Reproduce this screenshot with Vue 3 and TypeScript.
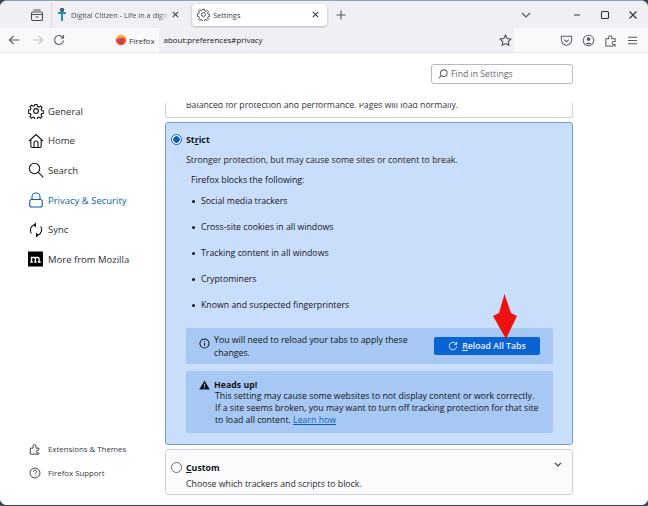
<script setup lang="ts">
const nav = [
  { label: 'General', icon: 'gear', active: false },
  { label: 'Home', icon: 'home', active: false },
  { label: 'Search', icon: 'search', active: false },
  { label: 'Privacy & Security', icon: 'lock', active: true },
  { label: 'Sync', icon: 'sync', active: false },
  { label: 'More from Mozilla', icon: 'moz', active: false },
]
const blocks = ['Social media trackers', 'Cross-site cookies in all windows', 'Tracking content in all windows', 'Cryptominers', 'Known and suspected fingerprinters']
const gear = 'M6.9 1.5h2.2l.4 2 1.4.6 1.7-1.1 1.5 1.5-1.1 1.7.6 1.4 2 .4v2.2l-2 .4-.6 1.4 1.1 1.7-1.5 1.5-1.7-1.1-1.4.6-.4 2H6.900l-.4-2-1.400-.6-1.700 1.100-1.500-1.500 1.100-1.700-.6-1.400-2-.4V7.100l2-.4.6-1.400-1.100-1.700 1.500-1.500 1.700 1.100 1.400-.6z'
</script>

<template>
  <div class="window">
    <header class="tabbar">
      <svg class="tab-list" width="14" height="14" viewBox="0 0 14 14"><rect x="1.500" y="4" width="11" height="8.500" rx="1.500" /><path d="M1.500 6.500h11M3.500 2h7M5.500 9h3" /></svg>
      <span class="tab-sep"></span>
      <div class="tab">
        <svg width="12" height="14" viewBox="0 0 12 14"><path d="M6 1.500v11.500M2 5h8" stroke="#1c93b8" stroke-width="2" fill="none" /><circle cx="6" cy="2" r="1.600" fill="#1c93b8" /></svg>
        <span class="tab-title">Digital Citizen - Life in a digital</span>
        <svg class="x" width="9" height="9" viewBox="0 0 9 9"><path d="M1 1l7 7M8 1l-7 7" /></svg>
      </div>
      <div class="tab current">
        <svg class="tab-gear" width="13" height="13" viewBox="0 0 16 16"><path :d="gear" /><circle cx="8" cy="8" r="2.400" /></svg>
        <span class="tab-title">Settings</span>
        <svg class="x" width="9" height="9" viewBox="0 0 9 9"><path d="M1 1l7 7M8 1l-7 7" /></svg>
      </div>
      <svg class="plus" width="10" height="10" viewBox="0 0 10 10"><path d="M5 .5v9M.5 5h9" /></svg>
      <span class="grow"></span>
      <svg class="caption chev" width="10" height="6" viewBox="0 0 10 6"><path d="M1 1l4 4 4-4" /></svg>
      <div class="caption-btns">
        <svg width="10" height="10" viewBox="0 0 10 10"><path d="M2 5h6" /></svg>
        <svg width="10" height="10" viewBox="0 0 10 10"><rect x="1.500" y="1.500" width="7" height="7" rx="1" /></svg>
        <svg width="10" height="10" viewBox="0 0 10 10"><path d="M1.500 1.500l7 7M8.500 1.500l-7 7" /></svg>
      </div>
    </header>

    <div class="toolbar">
      <div class="nav-btns">
        <svg width="12" height="12" viewBox="0 0 12 12"><path d="M11 6H1.500M5.500 2l-4 4 4 4" /></svg>
        <svg class="off" width="12" height="12" viewBox="0 0 12 12"><path d="M1 6h9.500M6.500 2l4 4-4 4" /></svg>
        <svg width="12" height="12" viewBox="0 0 12 12"><path d="M10.500 6.500a4.500 4.500 0 1 1-1.300-3.700L10.500 4M10.500 1v3h-3" /></svg>
      </div>
      <div class="urlbar">
        <div class="identity">
          <svg width="12" height="12" viewBox="0 0 12 12"><circle cx="6" cy="6.300" r="5" fill="#e8492f" stroke="none" /><path d="M1.500 5C2 2 4 .8 6.500 1c2.500.2 4 2 4.300 4C9.500 3.500 8 3.500 6.500 4 5 4.500 3 4 1.500 5z" fill="#ffa436" stroke="none" /><circle cx="6" cy="7" r="2.200" fill="#c93a6a" stroke="none" /></svg>
          <span>Firefox</span>
        </div>
        <span class="url">about:preferences#privacy</span>
        <span class="grow"></span>
        <svg class="star" width="13" height="13" viewBox="0 0 14 14"><path d="M7 1.200l1.800 3.700 4 .6-2.900 2.800.7 4L7 10.400l-3.600 1.900.7-4L1.200 5.500l4-.6z" /></svg>
      </div>
      <div class="tools">
        <svg width="13" height="13" viewBox="0 0 14 14"><path d="M1.500 2.500h11v4a5.500 5.500 0 0 1-11 0z" /><path d="M4.500 6l2.500 2.300L9.500 6" /></svg>
        <svg width="13" height="13" viewBox="0 0 14 14"><circle cx="7" cy="7" r="5.700" /><circle cx="7" cy="5.500" r="2" class="fill" /><path d="M3.500 11c.5-2.200 6.500-2.200 7 0z" class="fill" /></svg>
        <svg width="13" height="13" viewBox="0 0 14 14"><path d="M2 5h3V3.500a1.700 1.700 0 0 1 3.400 0V5H12v3h-1.500a1.700 1.700 0 0 0 0 3.400H12V13H2z" /></svg>
        <svg width="13" height="13" viewBox="0 0 14 14"><path d="M2 3.500h10M2 7h10M2 10.500h10" /></svg>
      </div>
    </div>

    <div class="page">
      <aside class="sidebar">
        <nav class="cats">
          <div v-for="n in nav" :key="n.label" class="cat" :class="{ active: n.active }">
            <svg v-if="n.icon === 'gear'" width="16" height="16" viewBox="0 0 16 16"><path :d="gear" /><circle cx="8" cy="8" r="2.400" /></svg>
            <svg v-else-if="n.icon === 'home'" width="16" height="16" viewBox="0 0 16 16"><path d="M1 8l7-6.500L15 8M2.800 6.500V13a1.500 1.500 0 0 0 1.500 1.500h7.400a1.500 1.500 0 0 0 1.500-1.500V6.500M6 14.500V10a2 2 0 0 1 4 0v4.500" /></svg>
            <svg v-else-if="n.icon === 'search'" width="16" height="16" viewBox="0 0 16 16"><circle cx="6.500" cy="6.500" r="5.200" /><path d="M10.300 10.300l5 5" /></svg>
            <svg v-else-if="n.icon === 'lock'" width="16" height="16" viewBox="0 0 16 16"><path d="M4 7V5a4 4 0 0 1 8 0v2" /><rect x="1.700" y="7.500" width="12.600" height="7.500" rx="2" /></svg>
            <svg v-else-if="n.icon === 'sync'" width="16" height="16" viewBox="0 0 16 16"><path d="M3.300 11.500A6 6 0 0 1 5.500 3M12.700 4.500A6 6 0 0 1 10.500 13" /><path d="M8 .5L5 3l3 2.500zM8 15.500l3-2.500-3-2.500z" class="fill" /></svg>
            <svg v-else width="16" height="16" viewBox="0 0 16 16"><rect width="15" height="15" y=".5" fill="#000" stroke="none" /><path d="M3.500 11V6.500h2.700a1.200 1.200 0 0 1 1.200 1.200V11M7.400 11V6.500h2.500a1.200 1.200 0 0 1 1.200 1.200V11M2.300 11h2.500M6.200 11h2.400M10 11h2.700" stroke="#fff" stroke-width="1.300" /></svg>
            <span>{{ n.label }}</span>
          </div>
        </nav>
        <div class="support">
          <div class="sup">
            <svg width="12" height="12" viewBox="0 0 14 14"><path d="M1.500 6h3.300V3.500a1.700 1.700 0 0 1 3.400 0V6h3.300v2.300h-1a1.700 1.700 0 0 0 0 3.400h1V13h-10z" /></svg>
            <span>Extensions &amp; Themes</span>
          </div>
          <div class="sup">
            <svg width="12" height="12" viewBox="0 0 14 14"><circle cx="7" cy="7" r="5.800" /><path d="M5.200 5.500a1.800 1.800 0 1 1 2.600 1.600c-.6.300-.8.700-.8 1.300M7 10v.6" /></svg>
            <span>Firefox Support</span>
          </div>
        </div>
      </aside>

      <main class="main">
        <div class="search-row">
          <div class="search">
            <svg width="10" height="10" viewBox="0 0 10 10"><circle cx="5.800" cy="4.200" r="3.300" /><path d="M3.300 6.700L.8 9.200" /></svg>
            <span>Find in Settings</span>
          </div>
        </div>
        <div class="scroller">
          <section class="card clipped"><p>Balanced for protection and performance. Pages will load normally.</p></section>
          <section class="card strict">
            <div class="head">
              <span class="radio on"></span>
              <strong>St<u>r</u>ict</strong>
            </div>
            <p class="desc">Stronger protection, but may cause some sites or content to break.</p>
            <p class="lead">Firefox blocks the following:</p>
            <ul class="list"><li v-for="b in blocks" :key="b">{{ b }}</li></ul>
            <div class="notice reload">
              <svg width="11" height="11" viewBox="0 0 12 12"><circle cx="6" cy="6" r="5" /><path d="M6 5.500v3M6 3.300v1" /></svg>
              <p>You will need to reload your tabs to apply these changes.</p>
              <button class="btn" type="button">
                <svg width="10" height="10" viewBox="0 0 12 12"><path d="M10.500 6.500a4.500 4.500 0 1 1-1.300-3.700L10.500 4M10.500 1v3h-3" /></svg>
                <span><u>R</u>eload All Tabs</span>
              </button>
            </div>
            <div class="notice warn">
              <svg width="11" height="10" viewBox="0 0 12 11"><path d="M6 .5L11.800 10.500H.2z" fill="#15141a" stroke="none" /><path d="M6 4v3.300M6 8.300v1" stroke="#a6c8f2" stroke-width="1.100" /></svg>
              <div>
                <strong>Heads up!</strong>
                <p>This setting may cause some websites to not display content or work correctly.<br />If a site seems broken, you may want to turn off tracking protection for that site<br />to load all content. <a>Learn how</a></p>
              </div>
            </div>
          </section>
          <section class="card custom">
            <div class="head">
              <span class="radio"></span>
              <strong><u>C</u>ustom</strong>
              <svg class="chevron" width="8" height="5" viewBox="0 0 8 5"><path d="M1 1l3 3 3-3" /></svg>
            </div>
            <p class="desc">Choose which trackers and scripts to block.</p>
          </section>
        </div>
      </main>
    </div>

    <svg class="arrow" width="28" height="48" viewBox="0 0 28 48"><path d="M12.500 2L19 21l6 3-11 23L1 24l6-3z" fill="#ee1111" stroke="none" /></svg>
  </div>
</template>

<style>
html, body { margin: 0; background: #33475a; }
</style>

<style scoped>
* { box-sizing: border-box; }
.window {
  position: relative;
  width: 648px;
  height: 505px;
  display: flex;
  flex-direction: column;
  background: #fff;
  border-radius: 7px;
  overflow: hidden;
  border-top: 1px solid #8fa4b5;
  font-family: "Open Sans", "Noto Sans", sans-serif;
  font-size: 8.750px;
  color: #15141a;
}
svg { fill: none; stroke: currentColor; stroke-width: 1.100; flex: none; }
svg .fill { fill: currentColor; stroke: none; }
p, ul { margin: 0; padding: 0; }
.grow { flex: 1; }

.tabbar { height: 27px; background: #f0f0f4; display: flex; align-items: center; color: #4a4a52; }
.tab-list { margin-left: 30px; }
.tab-sep { width: 1px; height: 26px; background: #dcdce2; margin-left: 7px; }
.tab { width: 135px; height: 22px; display: flex; align-items: center; gap: 3px; padding: 0 8px 0 4px; border-radius: 4px; font-size: 7.400px; }
.tab.current { margin-left: 5px; background: #fff; box-shadow: 0 1px 3px rgba(0,0,0,.25); padding-left: 5px; color: #3c3c44; }
.tab-title { flex: 1; white-space: nowrap; overflow: hidden; mask-image: linear-gradient(to left, transparent 0, #000 10px); }
.tab.current .tab-title { mask-image: none; }
.x { color: #3a3a42; stroke-width: 1.300; }
.tab .x { width: 7px; height: 7px; }
.plus { margin-left: 9px; color: #555; }
.chev { margin-right: 41px; color: #555; }
.caption-btns { display: flex; gap: 18px; margin-right: 10px; color: #333; }

.toolbar { height: 25px; background: #f9f9fb; display: flex; align-items: center; border-bottom: 1px solid #e4e4e8; color: #5b5b66; }
.nav-btns { display: flex; gap: 12px; margin-left: 8px; width: 104px; }
.nav-btns svg:last-child { margin-left: -3px; }
.nav-btns .off { color: #c4c4cc; }
.urlbar { width: 402px; height: 24px; background: #f0f0f4; display: flex; align-items: center; padding-right: 2px; }
.identity { display: flex; align-items: center; gap: 2px; height: 24px; padding: 0 4px 0 3px; background: #f9f9fb; color: #33333a; font-size: 8px; }
.url { margin-left: 5px; color: #15141a; font-size: 7.900px; }
.star { color: #444; }
.tools { display: flex; gap: 9px; margin-left: 46px; }

.page { flex: 1; display: flex; min-height: 0; background: #fff; }
.sidebar { width: 165px; display: flex; flex-direction: column; justify-content: space-between; padding: 50px 0 26px 28px; flex: none; }
.cats { display: flex; flex-direction: column; gap: 13.700px; }
.cat { display: flex; align-items: center; gap: 4px; height: 16px; font-size: 9.500px; color: #2e2e36; }
.cat svg { width: 16px; height: 16px; color: #15141a; }
.cat.active, .cat.active svg { color: #0e5fa8; }
.support { display: flex; flex-direction: column; gap: 12px; margin-left: 1px; }
.sup { display: flex; align-items: center; gap: 7px; height: 12px; font-size: 7.850px; color: #3a3a42; }

.main { flex: 1; display: flex; flex-direction: column; min-width: 0; padding-right: 75px; }
.search-row { display: flex; justify-content: flex-end; padding-top: 11px; height: 50px; flex: none; }
.search { width: 142px; height: 20px; border: 1px solid #b8b8bf; border-radius: 3px; display: flex; align-items: center; gap: 3px; padding-left: 6px; color: #6a6a72; font-size: 8.700px; }
.scroller { display: flex; flex-direction: column; gap: 4px; }
.card { border: 1px solid #cfcfd8; border-radius: 3px; background: #fff; }
.clipped { height: 15px; overflow: hidden; border-top: 0; border-radius: 0 0 3px 3px; padding-left: 20px; line-height: 12px; color: #33333a; }
.clipped p { margin-top: -4px; white-space: nowrap; font-size: 8.700px; }

.strict { height: 323px; background: #c9defa; border-color: #6f9fc8; padding: 10px 20px 0 20px; }
.head { position: relative; display: flex; align-items: center; height: 13px; }
.head strong { font-weight: 700; font-size: 8.800px; }
.radio { position: absolute; left: -15px; top: 1px; width: 11px; height: 11px; border-radius: 50%; border: 1px solid #6a6a72; background: #fff; }
.radio.on { border: 1.500px solid #0b5fc4; background: radial-gradient(circle, #0b5fc4 0 3px, #fff 3.500px); }
.desc { margin-top: 8px; color: #26262c; line-height: 13px; white-space: nowrap; font-size: 8.720px; }
.lead { margin: 7px 0 0 5px; line-height: 13px; }
.list { list-style: none; margin-top: 1px; }
.list li { position: relative; height: 26px; line-height: 26px; padding-left: 15px; }
.list li::before { content: ""; position: absolute; left: 6px; top: 12px; width: 3px; height: 3px; border-radius: 50%; background: #15141a; }
.notice { background: #a6c8f2; border-radius: 2px; width: 367px; display: flex; }
.reload { height: 36px; margin-top: 10px; align-items: center; padding: 1px 13px 0 13px; gap: 4px; }
.reload > svg { margin-bottom: 6px; }
.reload p { flex: 1; line-height: 12.500px; padding-right: 18px; }
.btn { width: 106px; height: 18px; margin-top: -1px; border: 0; border-radius: 2px; background: #0a63d3; color: #e8f1ff; font: 600 8.700px "Open Sans", sans-serif; display: flex; align-items: center; justify-content: center; gap: 4px; padding: 0; }
.warn { height: 62px; margin-top: 7px; padding: 9px 14px 9px 13px; gap: 4px; }
.warn strong { display: block; line-height: 10px; font-size: 8.800px; }
.warn p { line-height: 12px; white-space: nowrap; margin-top: 0; padding-left: 1px; }
.warn a { color: #0c5fc2; text-decoration: underline; }

.custom { height: 46px; padding: 11px 20px 0; background: #fbfbfd; }
.custom .desc { margin-top: 4px; font-size: 8.750px; }
.chevron { position: absolute; right: -10px; top: 1px; color: #444; }

.arrow { position: absolute; left: 492px; top: 291px; }
</style>
